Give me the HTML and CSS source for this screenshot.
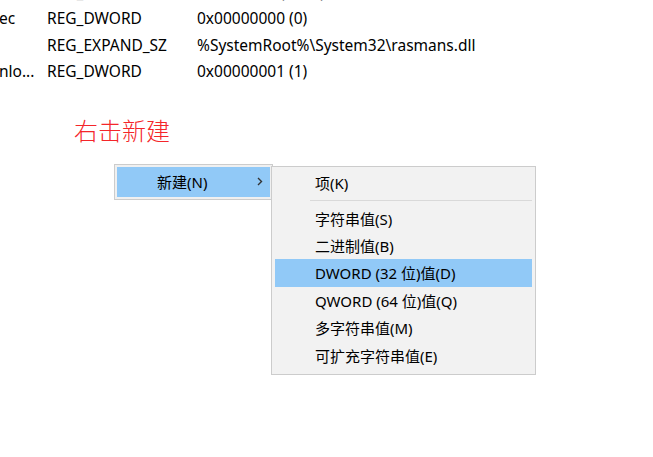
FILE: index.html
```html
<!DOCTYPE html>
<html lang="zh-CN">
<head>
<meta charset="utf-8">
<link rel="stylesheet" href="styles.css">
</head>
<body>
<div class="reg">
  <div class="row"><span class="c1"></span><span class="c2">REG_DWORD</span><span class="c3">0x00000e1 (3600)</span></div>
  <div class="row"><span class="c1">ec</span><span class="c2">REG_DWORD</span><span class="c3">0x00000000 (0)</span></div>
  <div class="row"><span class="c1"></span><span class="c2">REG_EXPAND_SZ</span><span class="c3">%SystemRoot%\System32\rasmans.dll</span></div>
  <div class="row"><span class="c1">nlo...</span><span class="c2">REG_DWORD</span><span class="c3">0x00000001 (1)</span></div>
</div>
<div class="note">右击新建</div>
<div class="menus">
  <div class="menu">
    <div class="mitem hot"><span class="mlabel">新建(N)</span>
      <svg class="chev" width="6" height="9" viewBox="0 0 6 9"><polyline points="1,1 4.5,4.5 1,8" fill="none" stroke="#333" stroke-width="1.4"/></svg>
    </div>
  </div>
  <div class="submenu">
    <div class="sitem first">项(K)</div>
    <div class="sep"></div>
    <div class="sitem">字符串值(S)</div>
    <div class="sitem">二进制值(B)</div>
    <div class="sitem hot">DWORD (32 位)值(D)</div>
    <div class="sitem">QWORD (64 位)值(Q)</div>
    <div class="sitem">多字符串值(M)</div>
    <div class="sitem">可扩充字符串值(E)</div>
  </div>
</div>
</body>
</html>
```
FILE: styles.css
```css
html, body {
  margin: 0;
  padding: 0;
  background: #ffffff;
  width: 653px;
  height: 457px;
  overflow: hidden;
  font-family: "Noto Sans", "Noto Sans CJK SC", sans-serif;
  color: #000;
}
.reg {
  margin-top: -21.5px;
  font-size: 15.5px;
}
.row {
  display: flex;
  height: 26.5px;
  align-items: center;
  white-space: nowrap;
}
.c1 { width: 48px; overflow: hidden; margin-left: -1px; }
.c2 { width: 150px; }
.note {
  margin-top: 30px;
  margin-left: 74px;
  font-family: "Noto Sans CJK SC", sans-serif;
  font-weight: 300;
  font-size: 24px;
  color: #f4262a;
  line-height: 30px;
  height: 30px;
}
.menus {
  display: flex;
  align-items: flex-start;
  margin-top: 19px;
  padding-left: 114px;
  font-size: 15px;
}
.menu {
  width: 153px;
  padding: 2px;
  border: 1px solid #cccccc;
  background: #f0f0f0;
}
.mitem {
  height: 30px;
  display: flex;
  align-items: center;
}
.mitem.hot { background: #91c9f7; }
.mlabel { margin-left: 40px; }
.chev { margin-left: auto; margin-right: 7px; }
.submenu {
  margin-left: -2px;
  margin-top: 2px;
  width: 257px;
  padding: 2px 3px 5px 3px;
  border: 1px solid #cccccc;
  background: #f2f2f2;
}
.sitem {
  height: 27.4px;
  padding-left: 40px;
  display: flex;
  align-items: center;
  white-space: nowrap;
}
.sitem.first { height: 28px; }
.sitem.hot { background: #91c9f7; }
.sep {
  height: 1px;
  margin: 3px 0 4px 35px;
  background: #d9d9d9;
}
.sitem.hot + .sitem { }
```
